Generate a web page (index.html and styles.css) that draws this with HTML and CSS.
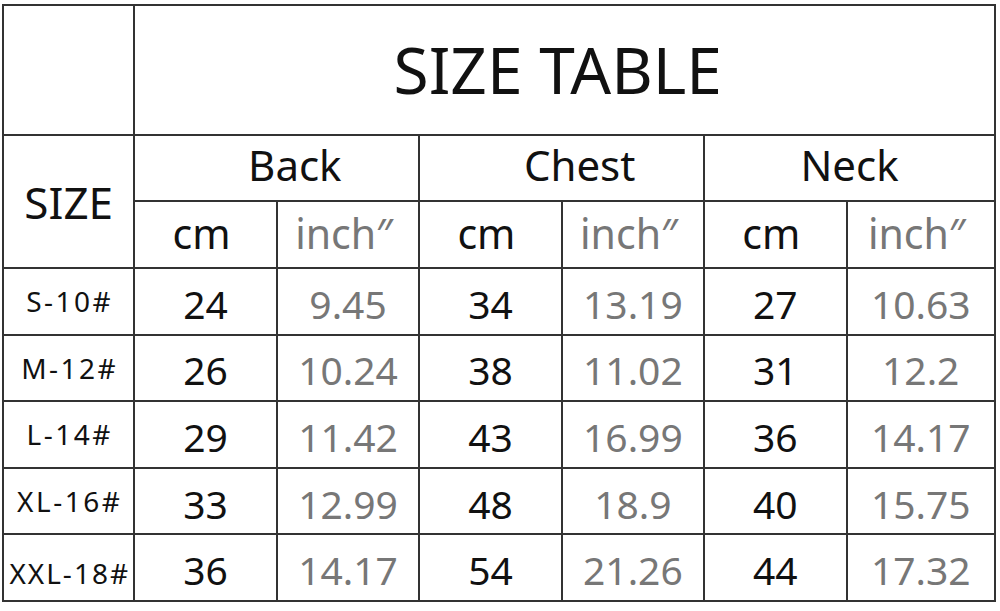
FILE: index.html
```html
<!DOCTYPE html>
<html lang="en">
<head>
<meta charset="utf-8">
<title>Size Table</title>
<link rel="stylesheet" href="styles.css">
</head>
<body>
<table class="size-table">
  <colgroup>
    <col class="c-size">
    <col class="c-val"><col class="c-val">
    <col class="c-val"><col class="c-val">
    <col class="c-val"><col class="c-last">
  </colgroup>
  <tr class="r-title">
    <td class="blank"></td>
    <td class="title" colspan="6">SIZE TABLE</td>
  </tr>
  <tr class="r-group">
    <td class="size-head" rowspan="2">SIZE</td>
    <td class="group shift" colspan="2">Back</td>
    <td class="group shift" colspan="2">Chest</td>
    <td class="group" colspan="2">Neck</td>
  </tr>
  <tr class="r-unit">
    <td class="unit">cm</td><td class="unit gray">inch″</td>
    <td class="unit">cm</td><td class="unit gray">inch″</td>
    <td class="unit">cm</td><td class="unit gray">inch″</td>
  </tr>
  <tr class="r-data">
    <td class="label">S-10#</td>
    <td class="num">24</td><td class="num gray">9.45</td>
    <td class="num">34</td><td class="num gray">13.19</td>
    <td class="num">27</td><td class="num gray">10.63</td>
  </tr>
  <tr class="r-data">
    <td class="label">M-12#</td>
    <td class="num">26</td><td class="num gray">10.24</td>
    <td class="num">38</td><td class="num gray">11.02</td>
    <td class="num">31</td><td class="num gray">12.2</td>
  </tr>
  <tr class="r-data">
    <td class="label">L-14#</td>
    <td class="num">29</td><td class="num gray">11.42</td>
    <td class="num">43</td><td class="num gray">16.99</td>
    <td class="num">36</td><td class="num gray">14.17</td>
  </tr>
  <tr class="r-data">
    <td class="label">XL-16#</td>
    <td class="num">33</td><td class="num gray">12.99</td>
    <td class="num">48</td><td class="num gray">18.9</td>
    <td class="num">40</td><td class="num gray">15.75</td>
  </tr>
  <tr class="r-data">
    <td class="label wide">XXL-18#</td>
    <td class="num">36</td><td class="num gray">14.17</td>
    <td class="num">54</td><td class="num gray">21.26</td>
    <td class="num">44</td><td class="num gray">17.32</td>
  </tr>
</table>
</body>
</html>
```
FILE: styles.css
```css
html, body {
  margin: 0;
  padding: 0;
  background: #fff;
}

body {
  font-family: "Noto Sans", "Open Sans", "DejaVu Sans", sans-serif;
  color: #111;
}

.size-table {
  margin: 4px 0 0 2px;
  border-collapse: collapse;
  table-layout: fixed;
  width: 994px;
}

.size-table td {
  border: 2px solid #333;
  padding: 0;
  text-align: center;
  vertical-align: middle;
  line-height: 1;
  white-space: nowrap;
  overflow: hidden;
}

.c-size { width: 131px; }
.c-val { width: 142px; }
.c-last { width: 148px; }

.r-title { height: 130px; }
.r-group { height: 66px; }
.r-unit { height: 67px; }
.r-data { height: 66.6px; }

.title {
  font-size: 64px;
  padding-right: 14px !important;
}

.size-head {
  font-size: 44px;
}

.group {
  font-size: 42px;
  padding-bottom: 6px !important;
}

.group.shift {
  padding-left: 36px !important;
}

.unit {
  font-size: 41px;
  padding-bottom: 2px !important;
  padding-right: 8px !important;
}

.num {
  font-size: 39px;
  padding-top: 4px !important;
}

.label {
  font-size: 28px;
  letter-spacing: 2.5px;
  padding-left: 2px !important;
}

.label.wide {
  letter-spacing: 2px;
  padding-top: 10px !important;
}

.gray {
  color: #777;
}
```
